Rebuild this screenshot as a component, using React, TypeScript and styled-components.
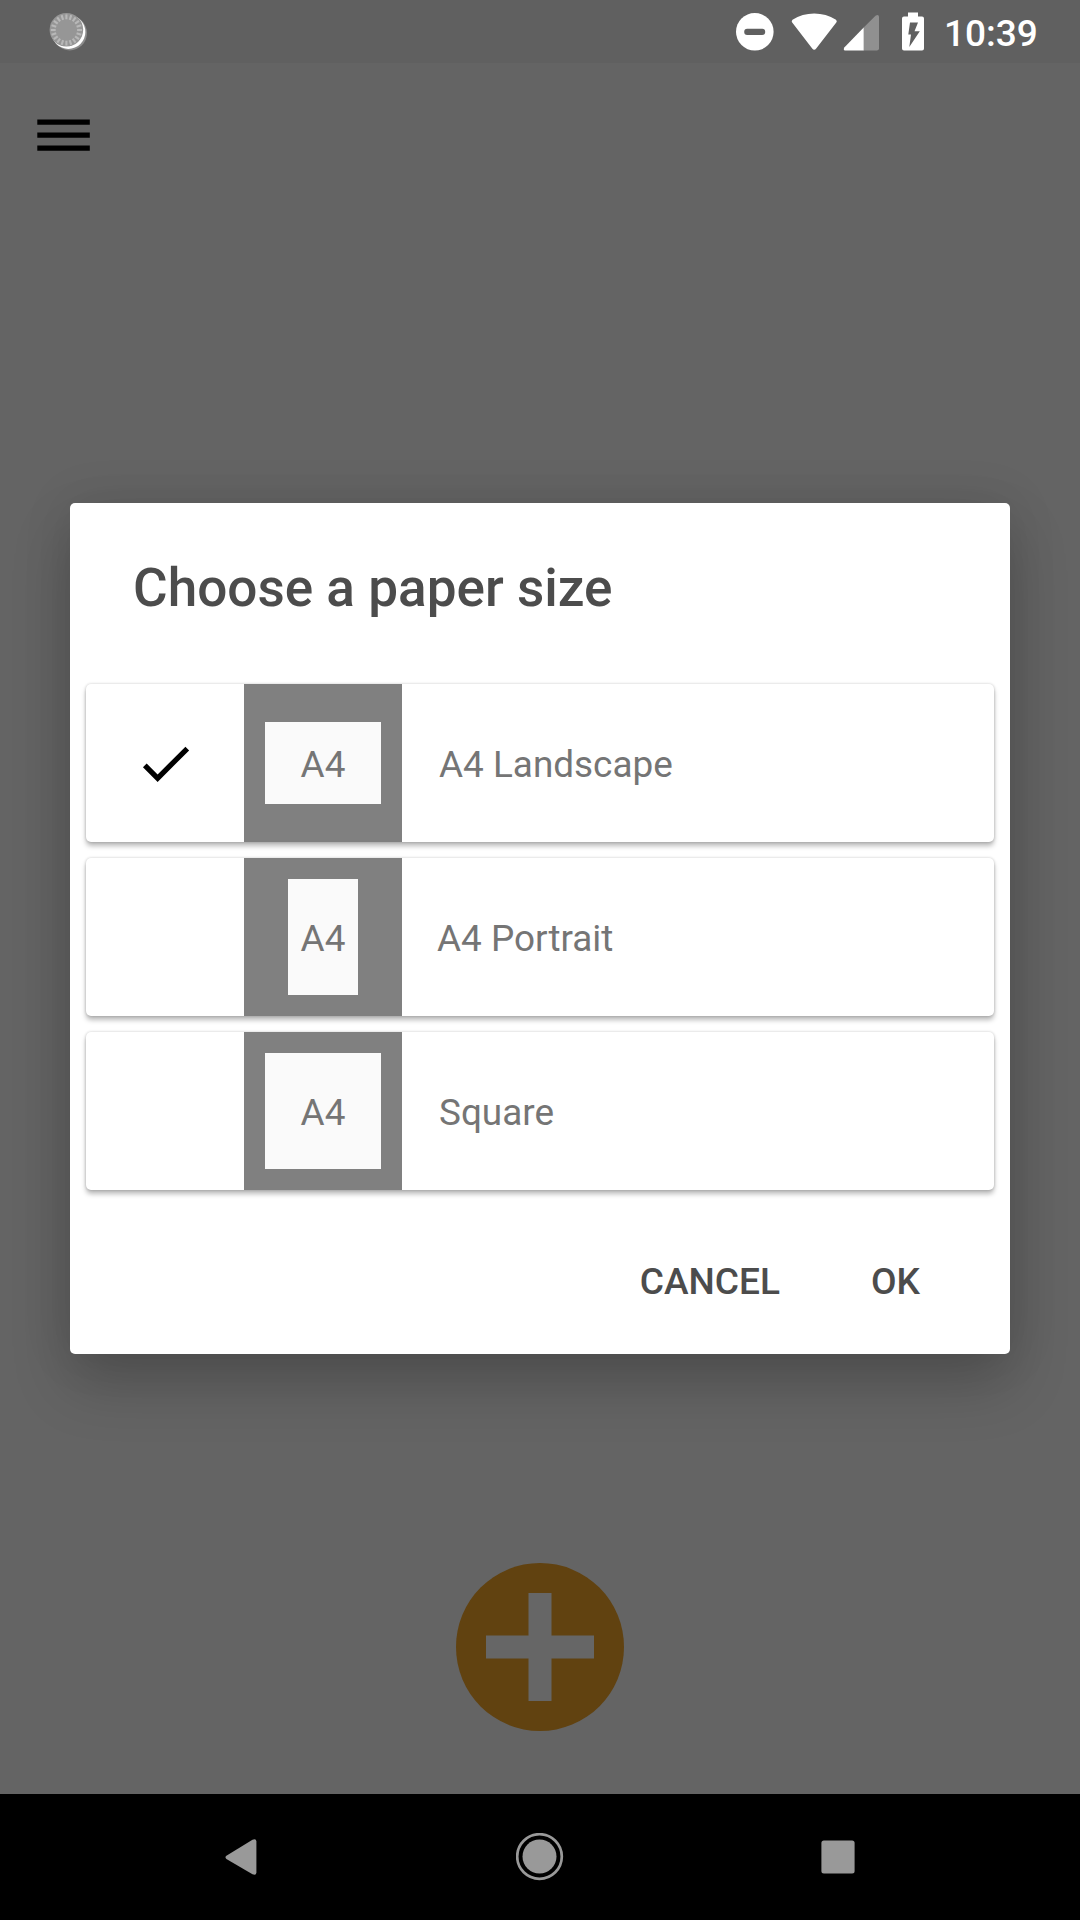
import React, { useState } from 'react';
import styled, { createGlobalStyle } from 'styled-components';

const GlobalStyle = createGlobalStyle`
  * { box-sizing: border-box; }
  html, body { margin: 0; padding: 0; background: #646464; }
  body { font-family: Roboto, "Noto Sans", sans-serif; }
`;

const Screen = styled.div`
  position: relative;
  display: flex;
  flex-direction: column;
  width: 1080px;
  height: 1920px;
  overflow: hidden;
  background: #646464;
`;

const StatusBar = styled.header`
  display: flex;
  align-items: center;
  justify-content: space-between;
  flex: none;
  height: 63px;
  padding: 0 42px 0 48px;
  background: #606060;
`;

const StatusIcons = styled.div`
  display: flex;
  align-items: center;
  height: 63px;
`;

const StatusIcon = styled.svg<{ $gap: number }>`
  display: block;
  flex: none;
  margin-right: ${(p) => p.$gap}px;
`;

const Clock = styled.time`
  width: 94px;
  color: #fff;
  font-size: 37px;
  font-weight: 500;
  line-height: 63px;
  white-space: nowrap;
  padding-top: 3px;
`;

const Main = styled.main`
  display: flex;
  flex-direction: column;
  justify-content: space-between;
  flex: 1;
`;

const MenuButton = styled.button`
  display: flex;
  width: 127px;
  height: 144px;
  padding: 55px 36px 0;
  border: 0;
  background: none;
`;

const AddButton = styled.button`
  display: flex;
  align-self: center;
  width: 168px;
  height: 168px;
  margin-bottom: 63px;
  padding: 0;
  border: 0;
  background: none;
`;

const NavBar = styled.nav`
  display: flex;
  align-items: center;
  justify-content: center;
  gap: 250px;
  flex: none;
  height: 126px;
  background: #000;
`;

const NavButton = styled.button`
  display: flex;
  padding: 0;
  border: 0;
  width: 48px;
  height: 48px;
  background: none;
`;

const Overlay = styled.div`
  position: absolute;
  inset: 63px 0 126px;
  display: flex;
  align-items: center;
  justify-content: center;
`;

const Dialog = styled.section`
  width: 940px;
  height: 851px;
  border-radius: 5px;
  background: #fff;
  box-shadow: 0 30px 60px rgba(0, 0, 0, 0.2), 0 0 50px rgba(0, 0, 0, 0.1);
`;

const Title = styled.h2`
  height: 181px;
  margin: 0;
  padding: 54px 63px 0;
  color: #4c4c4c;
  font-size: 53.1px;
  font-weight: 500;
  line-height: 62px;
`;

const OptionList = styled.div`
  display: flex;
  flex-direction: column;
  gap: 16px;
  padding: 0 16px;
`;

const Option = styled.div`
  display: flex;
  height: 158px;
  border-radius: 5px;
  background: #fff;
  box-shadow: 0 4px 5px rgba(0, 0, 0, 0.27), 0 0 3px rgba(0, 0, 0, 0.2);
`;

const CheckCell = styled.div`
  display: flex;
  align-items: center;
  justify-content: center;
  flex: none;
  width: 158px;
`;

const Preview = styled.div`
  display: flex;
  align-items: center;
  justify-content: center;
  flex: none;
  width: 158px;
  background: #808080;
`;

const Paper = styled.div<{ $w: number; $h: number }>`
  display: flex;
  align-items: center;
  justify-content: center;
  width: ${(p) => p.$w}px;
  height: ${(p) => p.$h}px;
  padding-top: 4px;
  background: #fafafa;
  color: #757575;
  font-size: 36.9px;
  line-height: 44px;
`;

const Label = styled.span<{ $indent: number }>`
  align-self: center;
  padding: 4px 0 0 ${(p) => p.$indent}px;
  color: #757575;
  font-size: 36.9px;
  line-height: 44px;
`;

const Actions = styled.footer`
  display: flex;
  justify-content: flex-end;
  gap: 91px;
  padding: 60px 90px 0 0;
`;

const ActionButton = styled.button`
  padding: 0;
  border: 0;
  background: none;
  color: #4c4c4c;
  font-family: inherit;
  font-size: 37.1px;
  font-weight: 500;
  line-height: 63px;
`;

const papers = [
  { name: 'A4 Landscape', w: 116, h: 82, indent: 37 },
  { name: 'A4 Portrait', w: 70, h: 116, indent: 35 },
  { name: 'Square', w: 116, h: 116, indent: 37 },
];

const spokes = Array.from({ length: 20 }, (_, i) => i * 18);

const Spinner = () => (
  <svg width="40" height="40" viewBox="0 0 40 40">
    <circle cx="21.7" cy="21.1" r="17.3" fill="#8c8c8c" />
    <circle cx="20.4" cy="19.9" r="17" fill="#fff" />
    <circle cx="18.4" cy="17.8" r="16.8" fill="#969696" />
    <g stroke="#b8b8b8" strokeWidth="2.1">
      {spokes.map((a) => (
        <line key={a} x1="18.4" y1="2.4" x2="18.4" y2="7.3" transform={`rotate(${a} 18.4 18)`} />
      ))}
    </g>
  </svg>
);

export default function App() {
  const [selected, setSelected] = useState('A4 Landscape');
  return (
    <Screen>
      <GlobalStyle />
      <StatusBar>
        <Spinner />
        <StatusIcons>
          <StatusIcon $gap={17} width="38" height="38" viewBox="0 0 38 38">
            <circle cx="18.8" cy="18.8" r="18.8" fill="#fff" />
            <rect x="8.2" y="15.7" width="21" height="6.2" rx="3" fill="#606060" />
          </StatusIcon>
          <StatusIcon $gap={5} width="47" height="38" viewBox="0 0 47 38">
            <path
              fill="#fff"
              d="M1.2 9.6Q0 8 1.5 6.7Q11.3 .5 23.2 .5Q35 .5 45 6.7Q46.5 8 45.3 9.6L25.2 35.4Q23.2 38 21.2 35.4Z"
            />
          </StatusIcon>
          <StatusIcon $gap={22} width="37" height="38" viewBox="0 0 37 38">
            <path fill="#909090" d="M20.4 14.8L32.8 2.6Q35.8 1 36 3.8V35.2Q36 37.5 33.8 37.5H20.4Z" />
            <path fill="#fff" d="M20.7 14.6V37.5H2Q0 37.3 1.3 34.5Z" />
          </StatusIcon>
          <StatusIcon $gap={20} width="22" height="40" viewBox="0 0 22 40">
            <path
              fill="#fff"
              fillRule="evenodd"
              d="M6 .5H16V4.5H20Q22 4.5 22 6.5V36.5Q22 38.5 20 38.5H2Q0 38.5 0 36.5V6.5Q0 4.5 2 4.5H6ZM8 10.5L6.3 22.5H9L7.3 35L17.8 19.2H12.5L16 10.5Z"
            />
          </StatusIcon>
          <Clock>10:39</Clock>
        </StatusIcons>
      </StatusBar>
      <Main>
        <MenuButton aria-label="Menu">
          <svg width="55" height="34" viewBox="0 0 55 34">
            <path fill="#000" d="M1.3 1.4h52.5v5.3h-52.5zM1.3 14.4h52.5v5.3h-52.5zM1.3 27.4h52.5v5.3h-52.5z" />
          </svg>
        </MenuButton>
        <AddButton aria-label="Add">
          <svg width="168" height="168" viewBox="0 0 168 168">
            <circle cx="84" cy="84" r="84" fill="#614210" />
            <path fill="#666" d="M72.5 30h23v42.5h42.5v23h-42.5v42.5h-23v-42.5H30v-23h42.5z" />
          </svg>
        </AddButton>
      </Main>
      <NavBar>
        <NavButton aria-label="Back">
          <svg width="48" height="48" viewBox="0 0 48 48">
            <path fill="#999" d="M8.4 22.8L34.5 6.8Q38.2 5.3 38.4 8.5V39.5Q38.2 42.7 34.5 41.2L8.4 25.9Q6.5 24.3 8.4 22.8Z" />
          </svg>
        </NavButton>
        <NavButton aria-label="Home">
          <svg width="48" height="48" viewBox="0 0 48 48">
            <circle cx="23.5" cy="23.5" r="22.3" fill="none" stroke="#999" strokeWidth="2.7" />
            <circle cx="23.5" cy="23.5" r="17" fill="#999" />
          </svg>
        </NavButton>
        <NavButton aria-label="Recent apps">
          <svg width="48" height="48" viewBox="0 0 48 48">
            <rect x="7.4" y="7.4" width="33.2" height="33.2" rx="2.5" fill="#999" />
          </svg>
        </NavButton>
      </NavBar>
      <Overlay>
        <Dialog role="dialog">
          <Title>Choose a paper size</Title>
          <OptionList>
            {papers.map((p) => (
              <Option key={p.name} onClick={() => setSelected(p.name)}>
                <CheckCell>
                  {selected === p.name && (
                    <svg width="63" height="63" viewBox="0 0 24 24">
                      <path d="M9 16.17L4.83 12l-1.42 1.41L9 19 21 7l-1.41-1.41z" />
                    </svg>
                  )}
                </CheckCell>
                <Preview>
                  <Paper $w={p.w} $h={p.h}>A4</Paper>
                </Preview>
                <Label $indent={p.indent}>{p.name}</Label>
              </Option>
            ))}
          </OptionList>
          <Actions>
            <ActionButton>CANCEL</ActionButton>
            <ActionButton>OK</ActionButton>
          </Actions>
        </Dialog>
      </Overlay>
    </Screen>
  );
}
